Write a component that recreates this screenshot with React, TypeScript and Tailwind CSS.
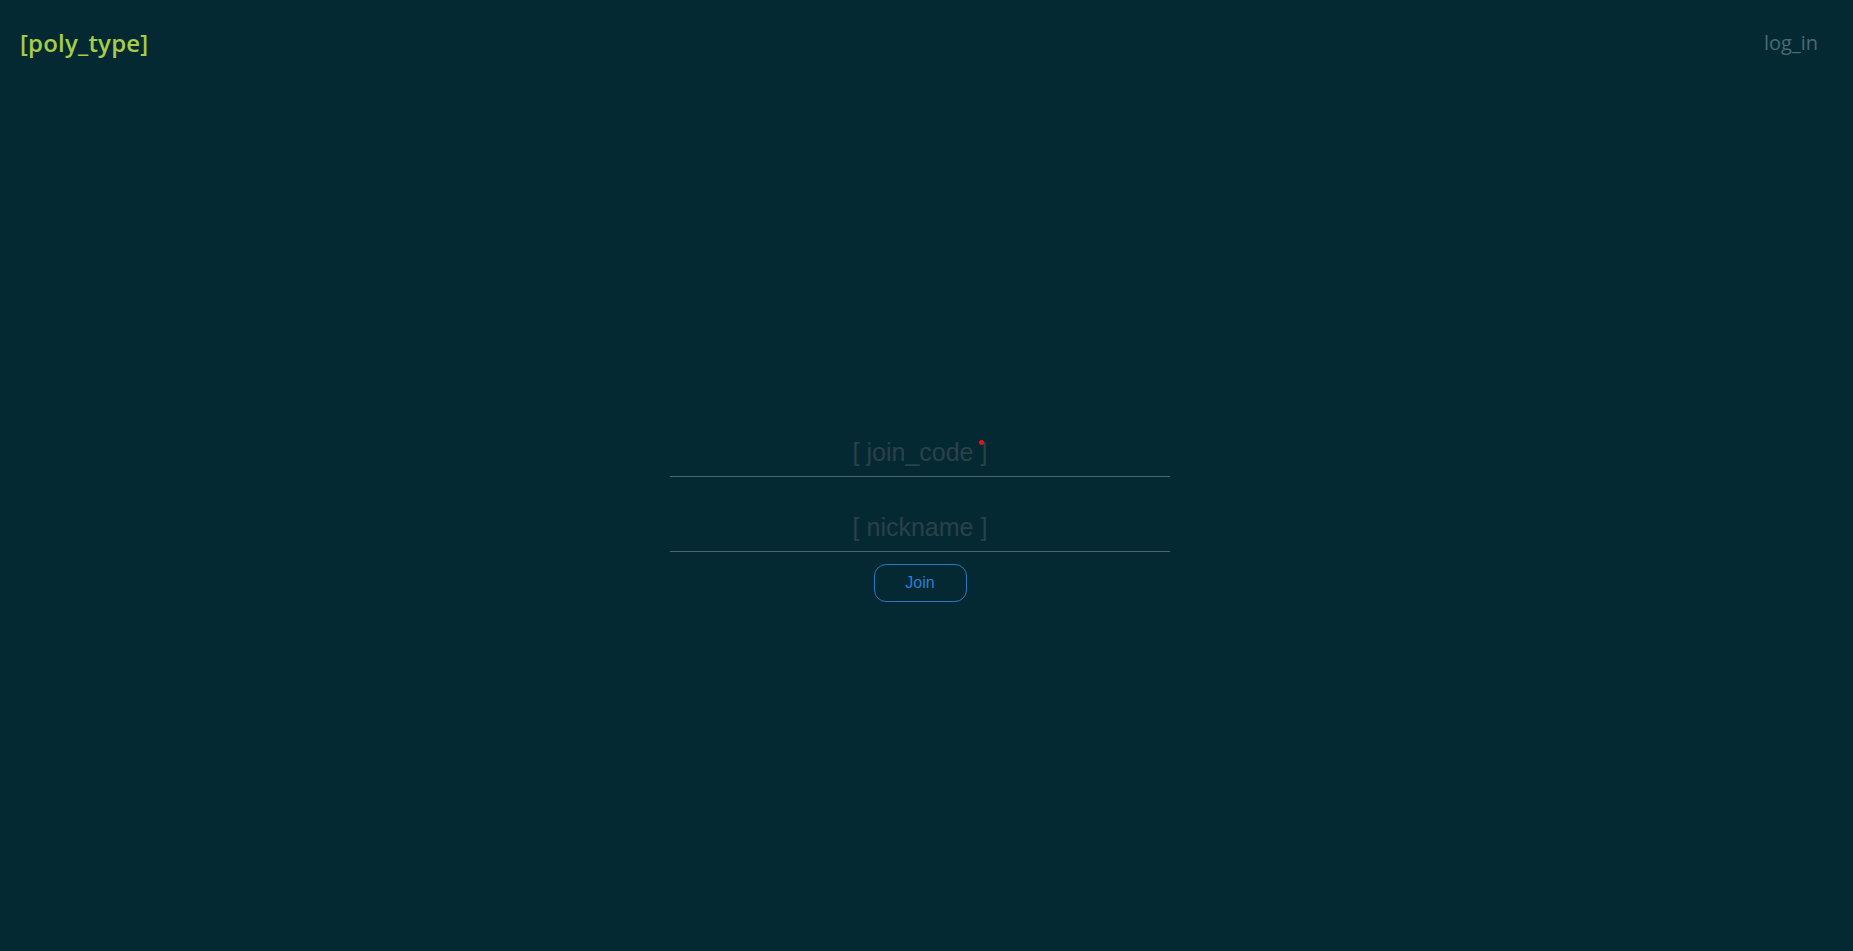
import { useState } from 'react';

export default function App() {
  const [code, setCode] = useState('');
  const [nick, setNick] = useState('');

  return (
    <div className="min-h-screen flex flex-col bg-[#052933] font-['Liberation_Sans',Arial,sans-serif]">
      {/* header */}
      <header className="h-[86px] flex items-center justify-between pl-[20px] pr-[35px]">
        <span className="text-[#a6cc48] text-[24px] font-semibold tracking-[0.2px] font-['Open_Sans','Noto_Sans',sans-serif]">
          [poly_type]
        </span>
        <span className="text-[#4b6974] text-[20px] font-['Open_Sans','Noto_Sans',sans-serif]">log_in</span>
      </header>

      {/* form */}
      <main className="flex-1 flex items-center justify-center pr-[13px] pb-[6px]">
        <form className="w-[500px] flex flex-col items-center" onSubmit={(e) => e.preventDefault()}>
          <div className="relative w-full">
            <input
              value={code}
              onChange={(e) => setCode(e.target.value)}
              placeholder="[ join_code ]"
              className="w-full h-[48px] bg-transparent text-center text-[25px] text-[#9fb4bc] placeholder:text-[#2a414a] border-b border-[#4a6570] outline-none"
            />
            {!code && (
              <span className="absolute left-[309px] top-[11px] w-[5px] h-[5px] rounded-full bg-[#e8141a]" />
            )}
          </div>
          <input
            value={nick}
            onChange={(e) => setNick(e.target.value)}
            placeholder="[ nickname ]"
            className="mt-[26px] w-full h-[49px] bg-transparent text-center text-[25px] text-[#9fb4bc] placeholder:text-[#2a414a] border-b border-[#4a6570] outline-none"
          />
          <button
            type="submit"
            className="mt-[12px] w-[93px] h-[38px] rounded-[12px] border border-[#2a78c2] text-[#2a7fd0] text-[16px]"
          >
            Join
          </button>
        </form>
      </main>
    </div>
  );
}
